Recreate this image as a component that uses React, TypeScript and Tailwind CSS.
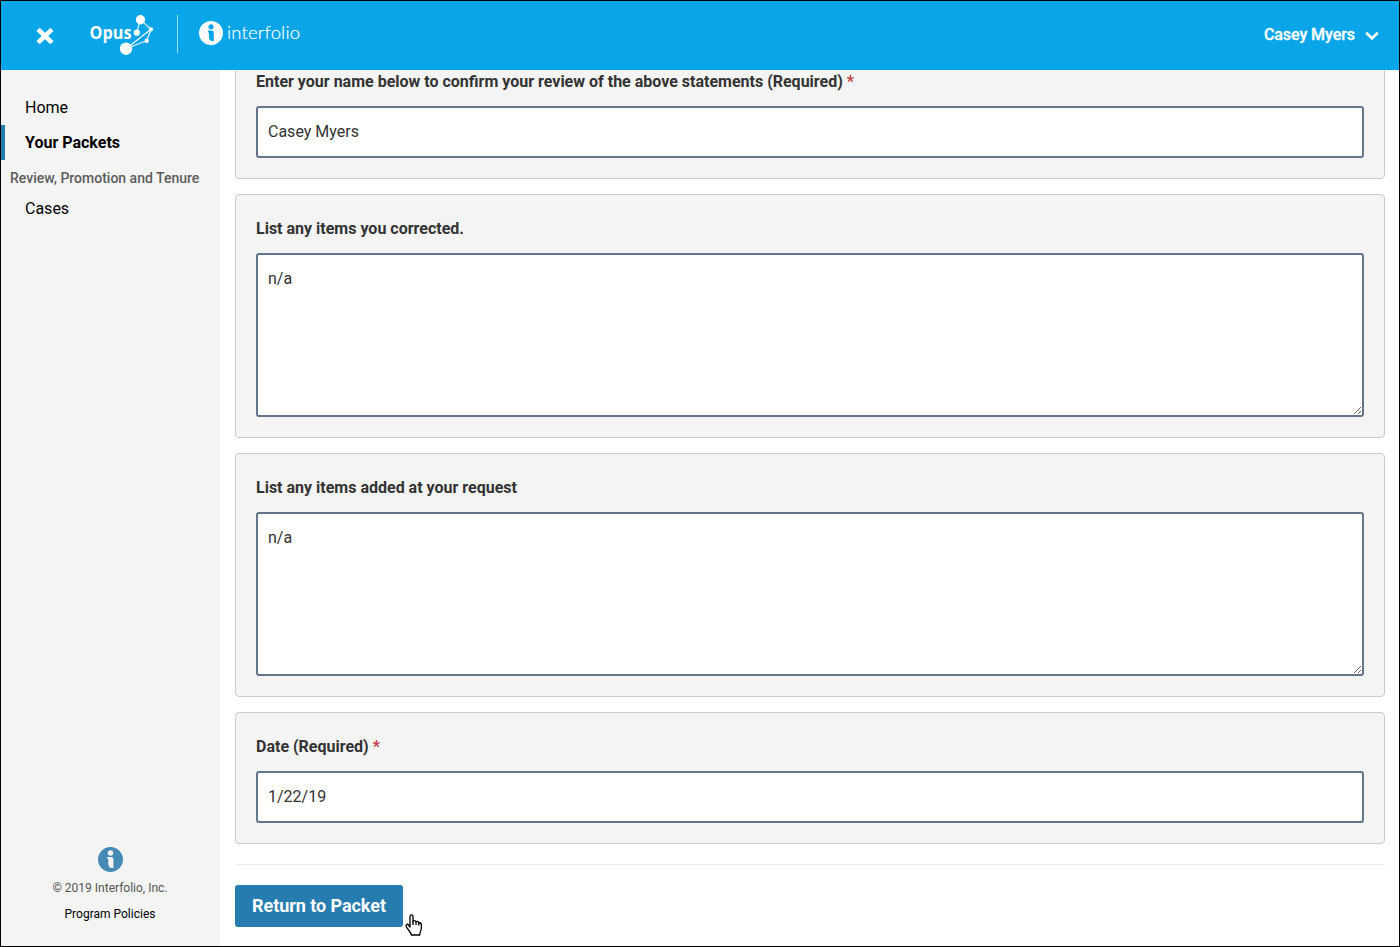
import React from "react";

function InfoMark({ className }: { className?: string }) {
  return (
    <svg viewBox="0 0 24 24" className={className} fill="currentColor">
      <path
        fillRule="evenodd"
        d="M12 0a12 12 0 1 0 0 24a12 12 0 1 0 0-24ZM12 3.2a2.6 2.6 0 1 1 0 5.2a2.6 2.6 0 1 1 0-5.2ZM8.8 9.6H12.6C14.2 9.6 14.8 10.4 14.8 12V20.2C11.6 20.2 9.9 18.9 9.9 16.2V11.8C9.2 11.6 8.8 10.8 8.8 9.6Z"
      />
    </svg>
  );
}

function OpusLogo() {
  return (
    <svg width="72" height="48" viewBox="86 10 72 48" fill="#fff">
      <text
        x="89.5"
        y="39.3"
        textLength="42"
        lengthAdjust="spacingAndGlyphs"
        className="font-['Open_Sans',sans-serif] text-[18px] font-bold"
      >
        Opus
      </text>
      <path
        d="M136.8 32.7 140.3 19.7 151 29.3 146.7 40.7 126 48.7 151 29.3"
        fill="none"
        stroke="#fff"
        strokeWidth="1.1"
      />
      <circle cx="140.5" cy="19.7" r="4.7" />
      <circle cx="136.8" cy="32.7" r="3.1" />
      <circle cx="151" cy="29.3" r="2.1" />
      <circle cx="146.7" cy="40.7" r="2.2" />
      <circle cx="126" cy="48.7" r="6.2" />
    </svg>
  );
}

function Header() {
  return (
    <header className="flex h-[69px] shrink-0 items-center bg-[#08a5e8] text-white">
      <svg width="18" height="18" viewBox="0 0 18 18" className="ml-[35px]">
        <path
          d="M3.7 3.9 14.3 14.1M14.3 3.9 3.7 14.1"
          stroke="#fff"
          strokeWidth="4.6"
          strokeLinecap="square"
          strokeLinejoin="round"
        />
      </svg>
      <div className="-mt-[3px] ml-[32px] h-[48px]">
        <OpusLogo />
      </div>
      <div className="-mt-[3px] ml-[19px] h-[38px] w-px bg-white/60" />
      <InfoMark className="-mt-[5px] ml-[21px] size-6" />
      <svg width="76" height="30" viewBox="0 0 76 30" className="-mt-[5px] ml-1" fill="#fff">
        <text
          x="0"
          y="21.3"
          textLength="73"
          lengthAdjust="spacing"
          stroke="#fff"
          strokeWidth="0.2"
          className="font-['Lato',sans-serif] text-[18.5px] font-light"
        >
          interfolio
        </text>
      </svg>
      <div className="mr-5 mb-[2px] ml-auto flex items-center gap-[10px]">
        <span className="text-[16px] font-medium tracking-[-0.06px] [-webkit-text-stroke:0.3px_#fff]">
          Casey Myers
        </span>
        <svg width="14" height="10" viewBox="0 0 14 10" className="mt-[2px]">
          <path d="M1.2 1.8 7 7.4 12.8 1.8" fill="none" stroke="#fff" strokeWidth="2.8" />
        </svg>
      </div>
    </header>
  );
}

function Sidebar() {
  return (
    <aside className="flex w-[219px] shrink-0 flex-col bg-[#f4f4f4] pt-5 text-[16px] text-black">
      <a className="flex h-[35px] items-center pl-6">Home</a>
      <a className="flex h-[35px] items-center border-l-4 border-[#277caf] pl-5 font-bold">
        Your Packets
      </a>
      <h2 className="flex h-[35px] items-center pt-[2px] pl-[9px] text-[14px] font-medium text-[#5c5c5c]">
        Review, Promotion and Tenure
      </h2>
      <a className="-mt-[4px] flex h-[35px] items-center pl-6">Cases</a>
      <footer className="mt-auto flex flex-col items-center pr-px text-[12px]">
        <InfoMark className="ml-px size-[25px] text-[#448ab5]" />
        <p className="mt-[7px] leading-[18px] text-[#555]">© 2019 Interfolio, Inc.</p>
        <a className="mt-2 mb-[23px] leading-[18px]">Program Policies</a>
      </footer>
    </aside>
  );
}

type FieldProps = {
  label: string;
  value: string;
  required?: boolean;
  multiline?: boolean;
};

function Field({ label, value, required, multiline }: FieldProps) {
  const box =
    "block w-full rounded-[3px] border-2 border-[#62758b] bg-white px-[10px] text-[16px] text-[#333] outline-none";
  return (
    <div className="shrink-0 rounded-[4px] border border-[#ccc] bg-[#f4f4f4] p-5">
      <label className="mb-[10px] block text-[16px] leading-[28px] font-bold text-[#333]">
        {label}
        {required && <span className="text-[#c13a3f]"> *</span>}
      </label>
      {multiline ? (
        <textarea
          defaultValue={value}
          className={box + " h-[164px] resize py-[10px] leading-[28px]"}
        />
      ) : (
        <input defaultValue={value} className={box + " h-[52px] pb-[2px]"} />
      )}
    </div>
  );
}

function HandCursor() {
  return (
    <svg
      width="18"
      height="23"
      viewBox="0 0 18 23"
      className="absolute top-[913px] left-[404px]"
      fill="#fff"
      stroke="#000"
      strokeWidth="1.3"
      strokeLinejoin="round"
    >
      <path d="M5 13V2.5C5 .4 8 .4 8 2.5V8C8 6 11 6.2 11 8.2 11 6.8 13.8 7 13.8 9.2 13.8 8.2 16.3 8.4 16.3 10.5V14C16.3 16.5 14.8 17.5 14.8 21H6.3C6 18 3 16 1.5 13 .3 10.8 2.2 9.5 3.5 11Z" />
      <path d="M8 7.5V11M11 8.2V11M13.8 9V11.5" />
    </svg>
  );
}

export default function App() {
  return (
    <div className="relative flex h-[947px] w-[1400px] flex-col overflow-hidden border border-black bg-white font-['Roboto',sans-serif]">
      <Header />
      <div className="flex min-h-0 grow">
        <Sidebar />
        <main className="flex grow flex-col justify-end gap-[15px] overflow-hidden pr-[14px] pb-[19px] pl-[15px]">
          <Field
            label="Enter your name below to confirm your review of the above statements (Required)"
            value="Casey Myers"
            required
          />
          <Field label="List any items you corrected." value="n/a" multiline />
          <Field label="List any items added at your request" value="n/a" multiline />
          <Field label="Date (Required)" value="1/22/19" required />
          <div className="mt-[5px] shrink-0 border-t border-[#eee] pt-5">
            <button className="h-[42px] w-[168px] rounded-[3px] bg-[#277caf] pb-[2px] text-[18px] font-bold tracking-[-0.06px] text-white">
              Return to Packet
            </button>
          </div>
        </main>
      </div>
      <HandCursor />
    </div>
  );
}
